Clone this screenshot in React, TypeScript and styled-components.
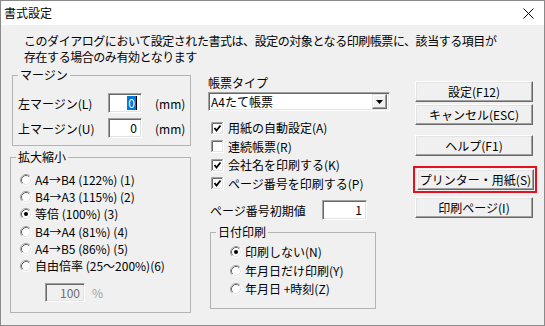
import { createGlobalStyle, styled } from 'styled-components';

const GlobalStyle = createGlobalStyle`
  html, body {
    margin: 0;
    padding: 0;
    background: #f0f0f0;
  }
  body {
    font-family: "Noto Sans CJK JP", "Noto Sans", sans-serif;
    font-size: 12px;
    color: #000;
  }
`;

const Window = styled.div`
  width: 545px;
  height: 326px;
  box-sizing: border-box;
  border: 1px solid #8a8a8a;
  display: flex;
  flex-direction: column;
  background: #f0f0f0;
`;

const TitleBar = styled.div`
  height: 24px;
  background: #fff;
  display: flex;
  align-items: center;
  justify-content: space-between;
  padding: 0 10px 0 3px;
  font-size: 12px;
  line-height: 14px;
`;

const Body = styled.div`
  flex: 1;
  padding: 8px 0 0 9px;
`;

const Description = styled.p`
  margin: 0 0 0 14px;
  line-height: 16px;
  letter-spacing: -0.45px;
`;

const Main = styled.div`
  display: flex;
  align-items: flex-start;
`;

const Column = styled.div<{ $width: number; $gap: number }>`
  width: ${(p) => p.$width}px;
  margin-left: ${(p) => p.$gap}px;
  display: flex;
  flex-direction: column;
`;

const GroupBox = styled.fieldset<{ $left: number; $width: number; $top: number; $pt: number; $pb: number }>`
  margin: ${(p) => p.$top}px 0 0 ${(p) => p.$left}px;
  width: ${(p) => p.$width}px;
  box-sizing: border-box;
  padding: ${(p) => p.$pt}px 5px ${(p) => p.$pb}px 5px;
  border: 1px solid #b4b4b4;
  min-inline-size: 0;
`;

const Legend = styled.legend`
  padding: 0 2px;
  line-height: 14px;
`;

const FieldRow = styled.div<{ $mt?: number }>`
  display: flex;
  align-items: center;
  height: 20px;
  margin-top: ${(p) => p.$mt ?? 0}px;
`;

const FieldLabel = styled.span<{ $width: number; $pl?: number }>`
  width: ${(p) => p.$width}px;
  padding-left: ${(p) => p.$pl ?? 0}px;
  box-sizing: border-box;
  flex-shrink: 0;
`;

const Sunken = styled.div<{ $width: number; $height?: number; $disabled?: boolean }>`
  width: ${(p) => p.$width}px;
  height: ${(p) => p.$height ?? 20}px;
  box-sizing: border-box;
  border: 1px solid;
  border-color: #a0a0a0 #fff #fff #a0a0a0;
  box-shadow: inset 1px 1px 0 #696969, inset -1px -1px 0 #e3e3e3;
  background: ${(p) => (p.$disabled ? '#f0f0f0' : '#fff')};
  color: ${(p) => (p.$disabled ? '#6d6d6d' : '#000')};
  display: flex;
  align-items: center;
  justify-content: flex-end;
  padding-right: 4px;
  line-height: 14px;
  flex-shrink: 0;
`;

const Selected = styled.span`
  background: #0078d7;
  color: #fff;
  padding: 0 1px;
  border-right: 1px solid #000;
`;

const Unit = styled.span<{ $ml: number; $muted?: boolean }>`
  margin-left: ${(p) => p.$ml}px;
  color: ${(p) => (p.$muted ? '#a0a0a0' : '#000')};
`;

const OptionRow = styled.label<{ $h: number; $pl: number }>`
  display: flex;
  align-items: center;
  gap: 3px;
  height: ${(p) => p.$h}px;
  padding-left: ${(p) => p.$pl}px;
  line-height: 14px;
  white-space: pre;
`;

const PlainLabel = styled.div`
  margin-top: 11px;
  line-height: 14px;
`;

const Select = styled.div`
  margin-top: 2px;
  width: 182px;
  height: 19px;
  box-sizing: border-box;
  border: 1px solid;
  border-color: #a0a0a0 #fff #fff #a0a0a0;
  box-shadow: inset 1px 1px 0 #696969, inset -1px -1px 0 #e3e3e3;
  background: #fff;
  display: flex;
  align-items: center;
  justify-content: space-between;
  padding: 2px;
  line-height: 14px;
`;

const DropButton = styled.span`
  width: 15px;
  height: 15px;
  box-sizing: border-box;
  border: 1px solid;
  border-color: #e3e3e3 #696969 #696969 #e3e3e3;
  box-shadow: inset -1px -1px 0 #a0a0a0, inset 1px 1px 0 #fff;
  background: #f0f0f0;
  display: flex;
  align-items: center;
  justify-content: center;
`;

const CheckList = styled.div`
  margin-top: 8px;
  display: flex;
  flex-direction: column;
`;

const CheckText = styled.span`
  margin-left: 1px;
`;

const Button = styled.button<{ $mt?: number }>`
  margin: ${(p) => p.$mt ?? 0}px 0 0 2px;
  width: 118px;
  height: 21px;
  box-sizing: border-box;
  border: 1px solid;
  border-color: #fff #696969 #696969 #fff;
  box-shadow: inset -1px -1px 0 #a0a0a0, inset 1px 1px 0 #e3e3e3;
  background: #f0f0f0;
  font-family: inherit;
  font-size: 12px;
  line-height: 14px;
  color: #000;
  padding: 0;
`;

const Highlight = styled.div`
  margin-top: 10px;
  width: 124px;
  box-sizing: border-box;
  border: 2px solid #e8101e;
  padding: 1px;
  display: flex;
  & > button {
    margin: 0 0 0 1px;
  }
`;

function Radio({ checked }: { checked?: boolean }) {
  return (
    <svg width="12" height="12" viewBox="0 0 12 12">
      <circle cx="6" cy="6" r="5" fill="#fff" />
      <path d="M2.11 9.89 A5.5 5.5 0 0 1 9.89 2.11" fill="none" stroke="#a0a0a0" />
      <path d="M9.89 2.11 A5.5 5.5 0 0 1 2.11 9.89" fill="none" stroke="#fff" />
      <path d="M2.82 9.18 A4.5 4.5 0 0 1 9.18 2.82" fill="none" stroke="#696969" />
      <path d="M9.18 2.82 A4.5 4.5 0 0 1 2.82 9.18" fill="none" stroke="#e3e3e3" />
      {checked && <circle cx="6" cy="6" r="2" fill="#000" />}
    </svg>
  );
}

function Checkbox({ checked }: { checked?: boolean }) {
  return (
    <svg width="13" height="13" viewBox="0 0 13 13">
      <rect x="0" y="0" width="13" height="13" fill="#fff" />
      <path d="M0.5 13 V0.5 H13" fill="none" stroke="#a0a0a0" />
      <path d="M1.5 12 V1.5 H12" fill="none" stroke="#696969" />
      <path d="M12.5 0 V12.5 H0" fill="none" stroke="#fff" />
      <path d="M11.5 1 V11.5 H1" fill="none" stroke="#e3e3e3" />
      {checked && <path d="M3.5 6 L5.5 8.5 L9.5 3.5" fill="none" stroke="#000" strokeWidth="1.8" />}
    </svg>
  );
}

const scaleOptions = [
  'A4→B4 (122%) (1)',
  'B4→A3 (115%) (2)',
  '等倍 (100%) (3)',
  'B4→A4 (81%) (4)',
  'A4→B5 (86%) (5)',
  '自由倍率 (25～200%)(6)',
];

const checks = [
  { label: '用紙の自動設定(A)', checked: true },
  { label: '連続帳票(R)', checked: false },
  { label: '会社名を印刷する(K)', checked: true },
  { label: 'ページ番号を印刷する(P)', checked: true },
];

const dateOptions = ['印刷しない(N)', '年月日だけ印刷(Y)', '年月日 +時刻(Z)'];

export default function App() {
  return (
    <>
      <GlobalStyle />
      <Window>
        <TitleBar>
          <span>書式設定</span>
          <svg width="11" height="11" viewBox="0 0 11 11">
            <path d="M0.5 0.5 L10.5 10.5 M10.5 0.5 L0.5 10.5" stroke="#000" strokeWidth="1" />
          </svg>
        </TitleBar>
        <Body>
          <Description>
            このダイアログにおいて設定された書式は、設定の対象となる印刷帳票に、該当する項目が
            <br />
            存在する場合のみ有効となります
          </Description>
          <Main>
            <Column $width={181} $gap={0}>
              <GroupBox $left={2} $width={179} $top={3} $pt={11} $pb={7}>
                <Legend>マージン</Legend>
                <FieldRow>
                  <FieldLabel $width={90}>左マージン(L)</FieldLabel>
                  <Sunken $width={34}>
                    <Selected>0</Selected>
                  </Sunken>
                  <Unit $ml={13}>(mm)</Unit>
                </FieldRow>
                <FieldRow $mt={5}>
                  <FieldLabel $width={90}>上マージン(U)</FieldLabel>
                  <Sunken $width={34}>0</Sunken>
                  <Unit $ml={13}>(mm)</Unit>
                </FieldRow>
              </GroupBox>
              <GroupBox $left={0} $width={181} $top={4} $pt={7} $pb={9}>
                <Legend>拡大縮小</Legend>
                {scaleOptions.map((opt, i) => (
                  <OptionRow key={opt} $h={17.3} $pl={4}>
                    <Radio checked={i === 2} />
                    {opt}
                  </OptionRow>
                ))}
                <FieldRow $mt={8}>
                  <FieldLabel $width={29} />
                  <Sunken $width={40} $height={19} $disabled>
                    100
                  </Sunken>
                  <Unit $ml={7} $muted>
                    %
                  </Unit>
                </FieldRow>
              </GroupBox>
            </Column>

            <Column $width={182} $gap={17}>
              <PlainLabel>帳票タイプ</PlainLabel>
              <Select>
                <span>A4たて帳票</span>
                <DropButton>
                  <svg width="7" height="4" viewBox="0 0 7 4">
                    <path d="M0 0 H7 L3.5 4 Z" fill="#000" />
                  </svg>
                </DropButton>
              </Select>
              <CheckList>
                {checks.map((c) => (
                  <OptionRow key={c.label} $h={18.5} $pl={3}>
                    <Checkbox checked={c.checked} />
                    <CheckText>{c.label}</CheckText>
                  </OptionRow>
                ))}
              </CheckList>
              <FieldRow $mt={7}>
                <FieldLabel $width={114} $pl={2}>
                  ページ番号初期値
                </FieldLabel>
                <Sunken $width={45}>1</Sunken>
              </FieldRow>
              <GroupBox $left={2} $width={166} $top={5} $pt={4} $pb={9}>
                <Legend>日付印刷</Legend>
                {dateOptions.map((opt, i) => (
                  <OptionRow key={opt} $h={18.5} $pl={14}>
                    <Radio checked={i === 0} />
                    {opt}
                  </OptionRow>
                ))}
              </GroupBox>
            </Column>

            <Column $width={124} $gap={23}>
              <Button $mt={16}>設定(F12)</Button>
              <Button $mt={2}>キャンセル(ESC)</Button>
              <Button $mt={10}>ヘルプ(F1)</Button>
              <Highlight>
                <Button>プリンター・用紙(S)</Button>
              </Highlight>
              <Button $mt={4}>印刷ページ(I)</Button>
            </Column>
          </Main>
        </Body>
      </Window>
    </>
  );
}
